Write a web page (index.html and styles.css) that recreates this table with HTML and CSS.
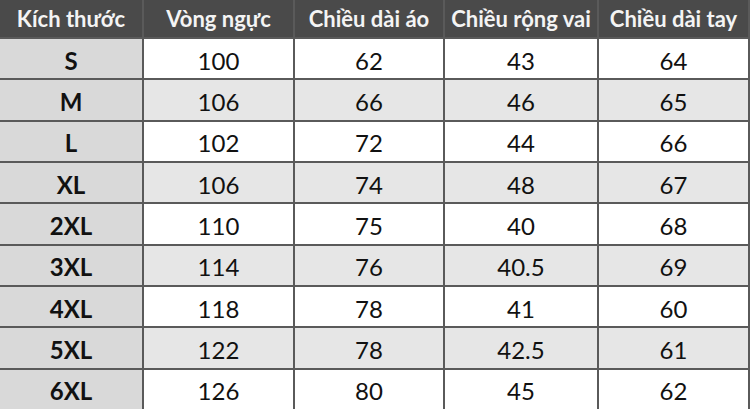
FILE: index.html
```html
<!DOCTYPE html>
<html lang="vi">
<head>
<meta charset="utf-8">
<title>Bảng kích thước</title>
<link rel="stylesheet" href="styles.css">
</head>
<body>
<div class="size-table">
  <div class="cell head">Kích thước</div>
  <div class="cell head">Vòng ngực</div>
  <div class="cell head">Chiều dài áo</div>
  <div class="cell head">Chiều rộng vai</div>
  <div class="cell head">Chiều dài tay</div>

  <div class="cell size">S</div><div class="cell">100</div><div class="cell">62</div><div class="cell">43</div><div class="cell">64</div>
  <div class="cell size">M</div><div class="cell alt">106</div><div class="cell alt">66</div><div class="cell alt">46</div><div class="cell alt">65</div>
  <div class="cell size">L</div><div class="cell">102</div><div class="cell">72</div><div class="cell">44</div><div class="cell">66</div>
  <div class="cell size">XL</div><div class="cell alt">106</div><div class="cell alt">74</div><div class="cell alt">48</div><div class="cell alt">67</div>
  <div class="cell size">2XL</div><div class="cell">110</div><div class="cell">75</div><div class="cell">40</div><div class="cell">68</div>
  <div class="cell size">3XL</div><div class="cell alt">114</div><div class="cell alt">76</div><div class="cell alt">40.5</div><div class="cell alt">69</div>
  <div class="cell size">4XL</div><div class="cell">118</div><div class="cell">78</div><div class="cell">41</div><div class="cell">60</div>
  <div class="cell size">5XL</div><div class="cell alt">122</div><div class="cell alt">78</div><div class="cell alt">42.5</div><div class="cell alt">61</div>
  <div class="cell size">6XL</div><div class="cell">126</div><div class="cell">80</div><div class="cell">45</div><div class="cell">62</div>
</div>
</body>
</html>
```

FILE: styles.css
```css
html, body {
  margin: 0;
  padding: 0;
  background: #ffffff;
  overflow: hidden;
}

.size-table {
  display: grid;
  grid-template-columns: 142px 149px 148px 152px 149px;
  grid-template-rows: 37px repeat(9, 1fr);
  column-gap: 2px;
  row-gap: 2px;
  width: 748px;
  height: 409px;
  padding: 0 2px 2px 0;
  background: #5a5a5a;
  font-family: Lato, "Open Sans", sans-serif;
}

.cell {
  display: flex;
  align-items: center;
  justify-content: center;
  background: #ffffff;
  color: #111111;
  font-size: 24px;
  padding-top: 3px;
  box-sizing: border-box;
  white-space: nowrap;
}

.cell.alt {
  background: #e6e6e6;
}

.cell.size {
  background: #d9d9d9;
  font-weight: 700;
}

.cell.head {
  background: #4a4a4a;
  color: #f4f4f4;
  font-weight: 700;
  font-size: 22px;
  padding-top: 0;
}
```
